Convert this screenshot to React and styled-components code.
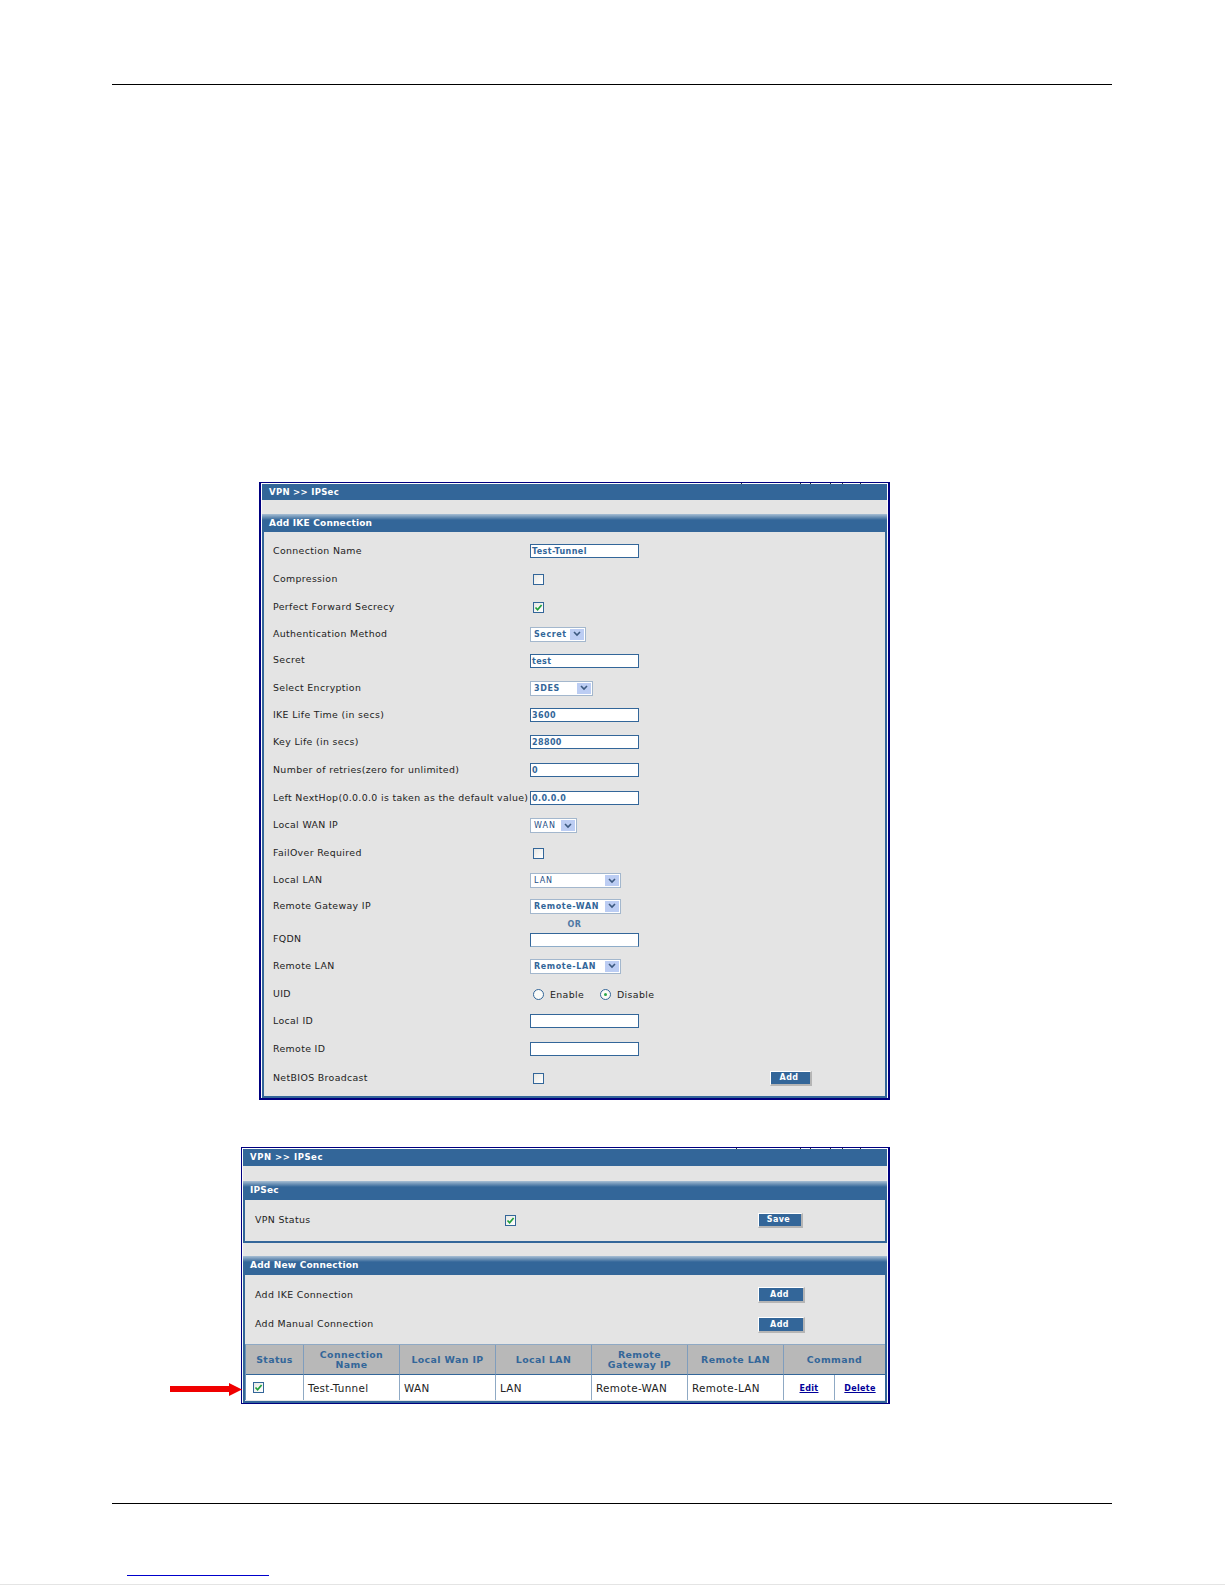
import styled, { createGlobalStyle } from 'styled-components';

const GlobalStyle = createGlobalStyle`
  html, body {
    margin: 0;
    padding: 0;
    background: #fff;
  }
  * {
    box-sizing: border-box;
  }
`;

const Page = styled.div`
  width: 1225px;
  height: 1585px;
  overflow: hidden;
  position: relative;
  display: flex;
  flex-direction: column;
  font-family: 'DejaVu Sans', Verdana, sans-serif;
`;

const Rule = styled.div`
  width: 1000px;
  height: 1px;
  margin-left: 112px;
  margin-top: ${({ $top }) => $top}px;
  background: #000;
`;

const Window = styled.div`
  position: relative;
  width: ${({ $w }) => $w}px;
  height: ${({ $h }) => $h}px;
  margin-left: ${({ $left }) => $left}px;
  margin-top: ${({ $top }) => $top}px;
  border: 1px solid #000080;
  border-width: ${({ $wide }) => ($wide ? '1px 2px 2px 2px' : '1px 2px 1px 1px')};
  padding: ${({ $wide }) => ($wide ? '1px' : '1px 1px 0 1px')};
  background: #fff;
  display: flex;
  flex-direction: column;
`;

const Tick = styled.span`
  position: absolute;
  top: 0;
  right: ${({ $r }) => $r}px;
  width: 1px;
  height: 1px;
  background: #333;
`;

const Inner = styled.div`
  flex: 1;
  background: #e4e4e4;
  display: flex;
  flex-direction: column;
`;

const PathBar = styled.div`
  height: ${({ $h }) => $h}px;
  margin-bottom: ${({ $gap }) => $gap}px;
  background: #336699;
  color: #fff;
  font-size: 8.5px;
  font-weight: bold;
  letter-spacing: ${({ $ls }) => $ls}px;
  line-height: ${({ $h }) => $h}px;
  padding-left: 7px;
  flex: none;
`;

const SectionHead = styled.div`
  height: ${({ $h }) => $h}px;
  background: linear-gradient(#a8bfd4 0, #6d92b6 3px, #336699 6px);
  color: #fff;
  font-size: 9px;
  font-weight: bold;
  letter-spacing: 0.2px;
  line-height: 19px;
  padding-left: 7px;
  flex: none;
`;

const SectionBody = styled.div`
  border: 2px solid #336699;
  border-top: 0;
  padding: ${({ $pad }) => $pad};
  ${({ $grow }) => ($grow ? 'flex: 1;' : '')}
  ${({ $h }) => ($h ? `height: ${$h}px; flex: none;` : '')}
`;

const SectionGap = styled.div`
  height: 13px;
  flex: none;
`;

const RowGroup = styled.div`
  padding-left: 10px;
  margin-bottom: 5px;
`;

const FormRow = styled.div`
  display: grid;
  grid-template-columns: ${({ $cols }) => $cols || '257px 240px 1fr'};
  align-items: center;
  height: ${({ $h }) => $h}px;
  font-size: 9.4px;
  letter-spacing: 0.35px;
  color: #222;
  white-space: nowrap;
`;

const Label = styled.span`
  margin-bottom: 2px;
`;

const Field = styled.div`
  width: 109px;
  height: 14px;
  background: #fff;
  border: 1px solid #336699;
  border-bottom-color: ${({ $soft }) => ($soft ? '#8fadc9' : '#336699')};
  color: #336699;
  font-size: 8px;
  font-weight: bold;
  letter-spacing: 0.4px;
  line-height: 14px;
  padding-left: 1px;
`;

const Select = styled.div`
  width: ${({ $w }) => $w}px;
  height: 15px;
  background: #fff;
  border: 1px solid #a3b7cd;
  display: flex;
  align-items: center;
  justify-content: space-between;
  padding: 1px 1px 1px 3px;
  color: ${({ $bold }) => ($bold ? '#336699' : '#1f4f85')};
  font-size: 8px;
  font-weight: ${({ $bold }) => ($bold ? 'bold' : 'normal')};
  letter-spacing: ${({ $bold }) => ($bold ? 0.6 : 1)}px;
`;

const SelectArrow = styled.span`
  width: 14px;
  height: 11px;
  background: #bccdf3;
  display: flex;
  align-items: center;
  justify-content: center;
  flex: none;
`;

const Box = styled.span`
  display: flex;
  align-items: center;
  justify-content: center;
  width: 11px;
  height: 11px;
  margin-left: ${({ $left }) => ($left === undefined ? 3 : $left)}px;
  border: 1px solid #336699;
  background: linear-gradient(135deg, #e8e8e4, #fff);
`;

const RadioGroup = styled.div`
  display: flex;
  align-items: center;
  margin-left: 3px;
`;

const Radio = styled.span`
  width: 11px;
  height: 11px;
  border-radius: 50%;
  border: 1px solid #336699;
  background: #fbfbf8;
  margin-right: 6px;
  margin-left: ${({ $left }) => $left || 0}px;
  display: flex;
  align-items: center;
  justify-content: center;
  &::after {
    content: '';
    display: ${({ $on }) => ($on ? 'block' : 'none')};
    width: 3px;
    height: 3px;
    border-radius: 50%;
    background: #2aa84a;
  }
`;

const OrLabel = styled.div`
  width: 89px;
  text-align: center;
  color: #336699;
  font-size: 8px;
  letter-spacing: 0.6px;
  font-weight: bold;
  opacity: 0.85;
`;

const ActionButton = styled.div`
  width: ${({ $w }) => $w}px;
  height: ${({ $h }) => $h || 15}px;
  background: #336699;
  border-top: 1px solid #fff;
  border-left: 1px solid #fff;
  border-right: 2px solid #b5b5b5;
  border-bottom: 2px solid #b5b5b5;
  color: #fff;
  font-size: 8px;
  font-weight: bold;
  letter-spacing: 0.4px;
  text-align: center;
  padding-right: 3px;
  line-height: ${({ $h }) => ($h ? 13 : 11)}px;
`;

const ConnTable = styled.div`
  display: grid;
  grid-template-columns: 58px repeat(5, 96px) 51px 50px;
  grid-template-rows: 30px 25px;
  border-left: 1px solid #6f93b8;
  border-top: 1px solid #8fa9c4;
  width: 640px;
`;

const HeadCell = styled.div`
  background: #b8b8b8;
  border-right: 1px solid #7f9dbd;
  border-bottom: 1px solid #336699;
  color: #336699;
  font-size: 9.4px;
  font-weight: bold;
  letter-spacing: 0.4px;
  line-height: 10px;
  display: flex;
  align-items: center;
  justify-content: center;
  text-align: center;
  ${({ $span }) => ($span ? `grid-column: span ${$span}; border-right: 0;` : '')}
`;

const DataCell = styled.div`
  background: #fff;
  border-right: 1px solid #8fa9c4;
  color: #222;
  font-size: 10.4px;
  letter-spacing: 0.3px;
  padding-left: ${({ $pad }) => ($pad === undefined ? 4 : $pad)}px;
  display: flex;
  align-items: center;
  ${({ $last }) => ($last ? 'border-right: 0;' : '')}
`;

const CommandLink = styled.a`
  color: #000099;
  font-size: 8px;
  font-weight: bold;
  text-decoration: underline;
  margin: 2px auto 0;
`;

const Arrow = styled.svg`
  position: absolute;
  left: -72px;
  top: 235px;
  width: 72px;
  height: 13px;
`;

const FooterLink = styled.div`
  width: 142px;
  height: 1px;
  margin-left: 127px;
  margin-top: 71px;
  background: #0000cc;
`;

const Edge = styled.div`
  height: 1px;
  margin-top: 8px;
  background: #e4e4e4;
`;

const Chevron = () => (
  <svg width="8" height="6" viewBox="0 0 8 6">
    <path d="M1 1 L4 4 L7 1" fill="none" stroke="#3d5a80" strokeWidth="1.6" />
  </svg>
);

const Check = () => (
  <svg width="9" height="9" viewBox="0 0 9 9">
    <path d="M1.5 4.5 L3.6 6.8 L7.6 2" fill="none" stroke="#1f9e3a" strokeWidth="1.7" />
  </svg>
);

const Ticks = ({ first }) =>
  [first, 87, 77, 57, 45, 27].map((r) => <Tick key={r} $r={r} />);

const ikeRows = [
  { h: 28, label: 'Connection Name', kind: 'field', value: 'Test-Tunnel' },
  { h: 28, label: 'Compression', kind: 'box' },
  { h: 28, label: 'Perfect Forward Secrecy', kind: 'box', on: true },
  { h: 26, label: 'Authentication Method', kind: 'select', value: 'Secret', w: 56, bold: true },
  { h: 27, label: 'Secret', kind: 'field', value: 'test' },
  { h: 28, label: 'Select Encryption', kind: 'select', value: '3DES', w: 63, bold: true },
  { h: 26, label: 'IKE Life Time (in secs)', kind: 'field', value: '3600' },
  { h: 28, label: 'Key Life (in secs)', kind: 'field', value: '28800' },
  { h: 28, label: 'Number of retries(zero for unlimited)', kind: 'field', value: '0' },
  { h: 28, label: 'Left NextHop(0.0.0.0 is taken as the default value)', kind: 'field', value: '0.0.0.0' },
  { h: 27, label: 'Local WAN IP', kind: 'select', value: 'WAN', w: 47 },
  { h: 28, label: 'FailOver Required', kind: 'box' },
  { h: 27, label: 'Local LAN', kind: 'select', value: 'LAN', w: 91 },
  { h: 24, label: 'Remote Gateway IP', kind: 'select', value: 'Remote-WAN', w: 91, bold: true },
  { h: 13, label: '', kind: 'or' },
  { h: 17, label: 'FQDN', kind: 'field', soft: true },
  { h: 36, label: 'Remote LAN', kind: 'select', value: 'Remote-LAN', w: 91, bold: true },
  { h: 20, label: 'UID', kind: 'radio' },
  { h: 34, label: 'Local ID', kind: 'field' },
  { h: 22, label: 'Remote ID', kind: 'field' },
  { h: 36, label: 'NetBIOS Broadcast', kind: 'box', button: 'Add' },
];

const Control = ({ row }) => {
  switch (row.kind) {
    case 'field':
      return <Field $soft={row.soft}>{row.value}</Field>;
    case 'box':
      return <Box>{row.on && <Check />}</Box>;
    case 'select':
      return (
        <Select $w={row.w} $bold={row.bold}>
          {row.value}
          <SelectArrow><Chevron /></SelectArrow>
        </Select>
      );
    case 'or':
      return <OrLabel>OR</OrLabel>;
    case 'radio':
      return (
        <RadioGroup>
          <Radio />Enable
          <Radio $on $left={16} />Disable
        </RadioGroup>
      );
    default:
      return null;
  }
};

const tunnelCells = ['Test-Tunnel', 'WAN', 'LAN', 'Remote-WAN', 'Remote-LAN'];

export default function App() {
  return (
    <Page>
      <GlobalStyle />
      <Rule $top={84} />

      {/* add ike connection form */}
      <Window $wide $w={631} $h={618} $left={259} $top={397}>
        <Ticks first={146} />
        <Inner>
          <PathBar $h={16} $gap={14} $ls={0.3}>VPN &gt;&gt; IPSec</PathBar>
          <SectionHead $h={18}>Add IKE Connection</SectionHead>
          <SectionBody $grow $pad="5px 0 0 9px">
            {ikeRows.map((row, i) => (
              <FormRow key={i} $h={row.h}>
                <Label>{row.label}</Label>
                <Control row={row} />
                {row.button && <ActionButton $w={42}>{row.button}</ActionButton>}
              </FormRow>
            ))}
          </SectionBody>
        </Inner>
      </Window>

      {/* ipsec status and connection list */}
      <Window $w={649} $h={257} $left={241} $top={47}>
        <Ticks first={151} />
        <Arrow viewBox="0 0 72 13">
          <path d="M0 3 H59 V0 L72 6.5 L59 13 V9 H0 Z" fill="#f00000" />
        </Arrow>
        <Inner>
          <PathBar $h={17} $gap={15} $ls={0.55}>VPN &gt;&gt; IPSec</PathBar>
          <SectionHead $h={19}>IPSec</SectionHead>
          <SectionBody $h={43} $pad="0 0 0 10px">
            <FormRow $h={41} $cols="250px 253px 1fr">
              <Label>VPN Status</Label>
              <Box $left={0}><Check /></Box>
              <ActionButton $w={45}>Save</ActionButton>
            </FormRow>
          </SectionBody>
          <SectionGap />
          <SectionHead $h={19}>Add New Connection</SectionHead>
          <SectionBody $grow $pad="5px 0 0 0">
            <RowGroup>
              <FormRow $h={30} $cols="503px 1fr">
                <Label>Add IKE Connection</Label>
                <ActionButton $w={47} $h={16}>Add</ActionButton>
              </FormRow>
              <FormRow $h={29} $cols="503px 1fr">
                <Label>Add Manual Connection</Label>
                <ActionButton $w={47} $h={16}>Add</ActionButton>
              </FormRow>
            </RowGroup>
            <ConnTable>
              <HeadCell>Status</HeadCell>
              <HeadCell>Connection<br />Name</HeadCell>
              <HeadCell>Local Wan IP</HeadCell>
              <HeadCell>Local LAN</HeadCell>
              <HeadCell>Remote<br />Gateway IP</HeadCell>
              <HeadCell>Remote LAN</HeadCell>
              <HeadCell $span={2}>Command</HeadCell>
              <DataCell $pad={7}>
                <Box $left={0}><Check /></Box>
              </DataCell>
              {tunnelCells.map((text) => (
                <DataCell key={text}>{text}</DataCell>
              ))}
              <DataCell $pad={0}><CommandLink>Edit</CommandLink></DataCell>
              <DataCell $pad={0} $last><CommandLink>Delete</CommandLink></DataCell>
            </ConnTable>
          </SectionBody>
        </Inner>
      </Window>

      <Rule $top={99} />
      <FooterLink />
      <Edge />
    </Page>
  );
}
